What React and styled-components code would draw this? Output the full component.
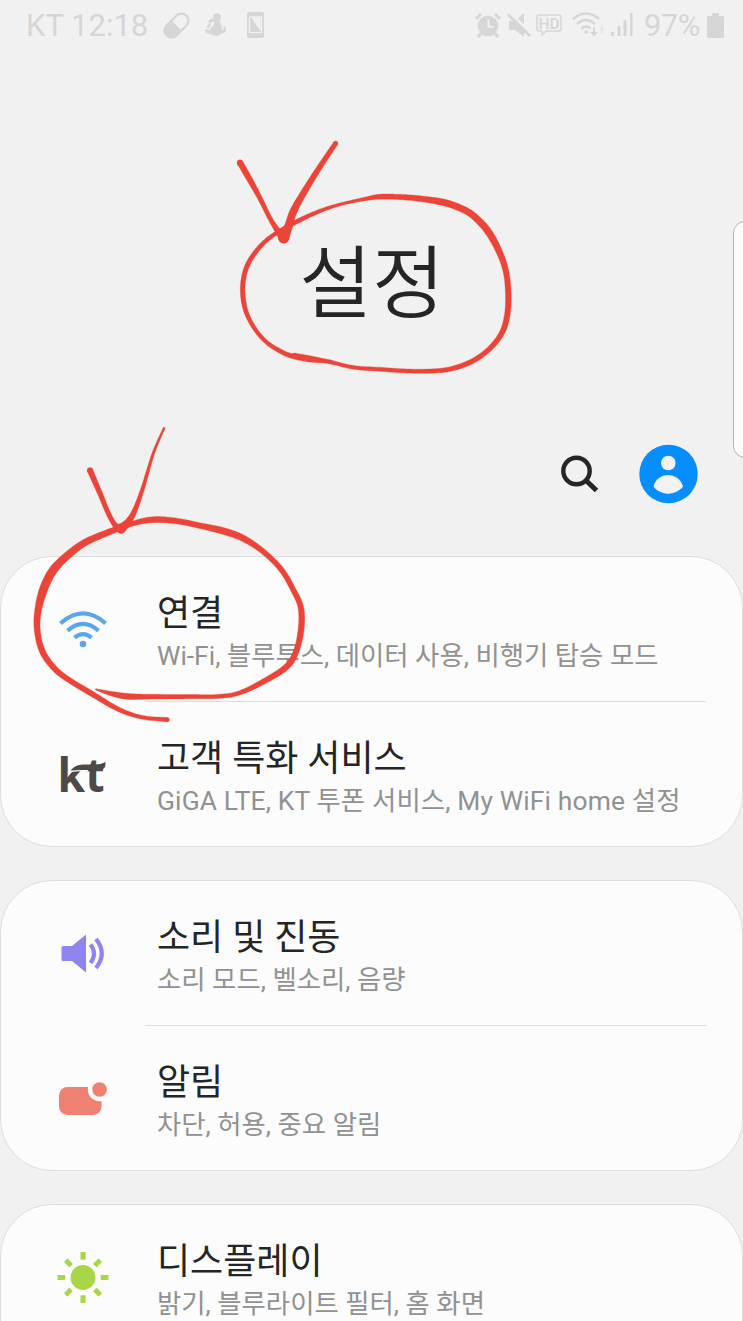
import styled, { createGlobalStyle } from "styled-components"

const GlobalStyle = createGlobalStyle`
  * {
    box-sizing: border-box;
  }

  body {
    margin: 0;
    background-color: #f1f1f1;
    font-family: Roboto, "Noto Sans CJK KR", sans-serif;
    overflow: hidden;
  }
`

const Screen = styled.main`
  position: relative;
  width: 743px;
  height: 1321px;
  overflow: hidden;
  background-color: #f1f1f1;
`

const StatusBar = styled.div`
  display: flex;
  align-items: center;
  justify-content: space-between;
  height: 50px;
  padding: 0 19px 0 26px;
  color: #d6d6d6;
  font-size: 31px;
  line-height: 50px;
`

const StatusGroup = styled.div`
  display: flex;
  align-items: center;
`

const StatusText = styled.span`
  width: ${({ $width }) => $width}px;
  white-space: nowrap;
  letter-spacing: ${({ $spacing }) => $spacing || 0}px;
  padding-top: 2px;
`

const Icon = styled.svg`
  display: block;
  flex-shrink: 0;
  overflow: visible;
  margin-left: ${({ $left }) => $left || 0}px;
`

const Header = styled.header`
  display: flex;
  justify-content: center;
  height: 374px;
  padding: 175px 0 0 1px;
`

const Title = styled.h1`
  margin: 0;
  font-size: 79px;
  font-weight: 350;
  line-height: 120px;
  color: #252525;
`

const Toolbar = styled.div`
  display: flex;
  align-items: center;
  justify-content: flex-end;
  gap: 41px;
  height: 100px;
  padding-right: 45px;
`

const ToolButton = styled.button`
  display: flex;
  padding: 0;
  border: 0;
  background: none;
`

const List = styled.div`
  display: flex;
  flex-direction: column;
  gap: 33px;
  padding-top: 32px;
`

const Card = styled.section`
  height: 291px;
  border: 1px solid #dedede;
  border-radius: 52px;
  background-color: #fcfcfc;
`

const Row = styled.div`
  display: flex;
  height: 145px;
`

const IconSlot = styled.div`
  display: flex;
  align-items: center;
  justify-content: center;
  width: 144px;
  padding: 0 0 1px 19px;
  flex-shrink: 0;
`

const RowBody = styled.div`
  flex: 1;
  margin-right: 36px;
  padding: 35px 0 0 12px;
  white-space: nowrap;
  border-bottom: ${({ $divider }) => ($divider ? "1px solid #dcdcdc" : "0")};
`

const RowTitle = styled.div`
  font-size: 36px;
  line-height: 44px;
  color: #252525;
`

const RowText = styled.div`
  margin-top: 2px;
  font-size: 26.4px;
  line-height: 36px;
  letter-spacing: ${({ $spacing }) => $spacing || 0}px;
  color: #919191;
`

const EdgeHandle = styled.div`
  position: absolute;
  top: 221px;
  left: 733px;
  width: 24px;
  height: 237px;
  border: 1px solid #b4b4b4;
  border-radius: 13px;
  background-color: #fcfcfc;
`

const Ink = styled.svg`
  position: absolute;
  top: 0;
  left: 0;
  pointer-events: none;
  fill: #ec4438;
  stroke: #ec4438;
`

// [x, y, width], three units to the pixel, relative to each group's origin
const titleInk = [
  [[222, 675, 12], [280, 686, 13], [335, 697, 11], [400, 712, 11], [480, 718, 12], [560, 723, 12], [640, 723, 13], [700, 715, 14], [760, 692, 15], [810, 655, 15], [845, 610, 16], [861, 560, 17], [865, 500, 17], [859, 430, 17], [840, 370, 19], [805, 305, 21], [760, 257, 20], [720, 234, 20], [670, 217, 20], [600, 206, 17], [540, 201, 16], [480, 200, 15], [440, 206, 11], [400, 214, 9], [350, 226, 9], [300, 243, 11], [240, 270, 13], [165, 312, 12], [120, 350, 13], [85, 400, 14], [70, 450, 14], [69, 500, 14], [80, 550, 13], [105, 597, 12], [140, 637, 12], [180, 663, 13], [215, 678, 14], [270, 688, 16], [335, 695, 9]],
  [[60, 98, 18], [90, 150, 17], [120, 205, 14], [150, 265, 13], [175, 305, 18], [191, 325, 28]],
  [[347, 40, 14], [300, 110, 16], [250, 190, 19], [220, 245, 22], [205, 290, 24], [191, 324, 32]],
]

const connectionInk = [
  [[228, 808, 4], [270, 820, 13], [320, 829, 18], [370, 830, 15], [500, 830, 13], [600, 829, 12], [660, 818, 13], [730, 785, 16], [800, 740, 18], [830, 690, 17], [844, 620, 18], [842, 560, 17], [820, 510, 16], [785, 450, 16], [730, 395, 16], [670, 355, 19], [610, 333, 20], [540, 317, 17], [470, 303, 17], [400, 299, 18], [340, 310, 15], [270, 335, 18], [200, 365, 20], [150, 400, 22], [100, 450, 25], [70, 510, 25], [53, 580, 20], [53, 640, 18], [70, 700, 18], [110, 752, 17], [160, 788, 16], [220, 824, 16], [280, 860, 14], [330, 882, 12], [380, 894, 11], [442, 899, 13]],
  [[210, 151, 17], [240, 220, 15], [265, 280, 14], [285, 315, 16], [303, 326, 28]],
  [[432, 25, 6], [400, 100, 8], [370, 200, 11], [345, 270, 15], [325, 305, 20], [303, 326, 28]],
]

const spline = (a, b, c, d, t) =>
  0.5 * (2 * b + (c - a) * t + (2 * a - 5 * b + 4 * c - d) * t * t + (3 * b - a - 3 * c + d) * t * t * t)

// Turns a pen line with varying pressure into a closed outline
const outline = (points) => {
  const line = []
  for (let i = 0; i < points.length - 1; i++) {
    const a = points[i - 1] || points[i]
    const d = points[i + 2] || points[i + 1]
    for (let s = 0; s < 8; s++) {
      line.push([0, 1, 2].map((k) => spline(a[k], points[i][k], points[i + 1][k], d[k], s / 8)))
    }
  }
  line.push(points[points.length - 1])
  const left = []
  const right = []
  line.forEach(([x, y, w], i) => {
    const p = line[i - 1] || line[i]
    const n = line[i + 1] || line[i]
    const dx = n[0] - p[0]
    const dy = n[1] - p[1]
    const len = Math.hypot(dx, dy) || 1
    const ox = (-dy / len) * (w / 2)
    const oy = (dx / len) * (w / 2)
    left.push(`${(x + ox).toFixed(1)} ${(y + oy).toFixed(1)}`)
    right.unshift(`${(x - ox).toFixed(1)} ${(y - oy).toFixed(1)}`)
  })
  return `M${left.join("L")}L${right.join("L")}Z`
}

const PenStroke = ({ points }) => {
  const ends = [points[0], points[points.length - 1]]
  return (
    <>
      <path d={outline(points)} />
      {ends.map(([x, y, w]) => <circle key={`${x}-${y}`} cx={x} cy={y} r={w / 2} />)}
    </>
  )
}

const PillIcon = () => (
  <Icon $left={14} width="27" height="27" viewBox="0 0 27 27">
    <g transform="rotate(-45 13.5 13.5)">
      <rect x="-.5" y="6.5" width="28" height="14" rx="7" fill="none" stroke="currentColor" strokeWidth="2.2" />
      <path d="M13.5 5.500v16H6.500a8 8 0 0 1 0-16z" fill="currentColor" />
    </g>
  </Icon>
)

const FigureIcon = () => (
  <Icon $left={15} width="22" height="24" viewBox="0 0 22 24" fill="currentColor">
    <circle cx="12" cy="4.200" r="4" />
    <path d="M9.500 4 3 8l1 2 7-2.500z" />
    <path d="M9.500 7h5l1 4c1.500 2 1.500 4 1 6 2 0 3-1.500 2-3.500l1.500-.5c2.500 4 .5 7.500-3.500 7.500-2 3-8.500 3-11 .5C2 21 0 19.500 0 17l2-1c.5 1 1.500 1.500 3 1 .5-2 2-3.500 4-5z" />
    <path d="m1.500 14 3-4 2 .5-3 5z" />
  </Icon>
)

const PhoneIcon = () => (
  <Icon $left={20} width="17" height="26" viewBox="0 0 17 26">
    <rect width="17" height="26" rx="2" fill="currentColor" />
    <rect x="2.500" y="5" width="12" height="15.500" fill="none" stroke="#f1f1f1" strokeWidth="1.300" />
    <path d="M5 6.500 13.500 19V5.500H5z" fill="#f1f1f1" />
  </Icon>
)

const AlarmIcon = () => (
  <Icon width="26" height="25" viewBox="0 0 26 25" fill="none" stroke="currentColor">
    <circle cx="13" cy="13" r="10.300" fill="currentColor" stroke="none" />
    <path d="M1 6 6 1M20 1l5 5" strokeWidth="3" />
    <path d="m6 20-3 4M20 20l3 4" strokeWidth="3" />
    <path d="M13.500 6.500v7.200h5" stroke="#f1f1f1" strokeWidth="2" />
  </Icon>
)

const MuteIcon = () => (
  <Icon $left={7} width="24" height="25" viewBox="0 0 24 25">
    <path d="M1 8h6l9-8v24l-9-7H1z" fill="currentColor" />
    <path d="M2 0 24 21" stroke="#f1f1f1" strokeWidth="3" />
    <path d="M0 1.500 22 23" stroke="currentColor" strokeWidth="2.800" />
  </Icon>
)

const HdIcon = () => (
  <Icon $left={4} width="26" height="23" viewBox="0 0 26 23">
    <path d="M3 1h20q2 0 2 2v12q0 2-2 2H10l-4 4v-4H3q-2 0-2-2V3q0-2 2-2z" fill="none" stroke="currentColor" strokeWidth="1.500" />
    <text x="13" y="14.500" textAnchor="middle" fontSize="15.500" fontWeight="500" fill="currentColor">HD</text>
  </Icon>
)

const StatusWifiIcon = () => (
  <Icon $left={10} width="33" height="26" viewBox="0 0 33 26" fill="none" stroke="currentColor" strokeWidth="2.600">
    <path d="M1 7Q14-4 27 7M5 12Q14 4 23 12M9.500 16.500Q14 12.500 18.500 16.500" />
    <circle cx="14" cy="20" r="1.800" fill="currentColor" stroke="none" />
    <path d="M22 15v6" strokeWidth="2" />
    <path d="M18 20h8l-4 4.500z" fill="currentColor" stroke="none" />
    <path d="m27 18 3-4 3 4h-2v4h-2v-4z" fill="currentColor" stroke="none" opacity=".4" />
  </Icon>
)

const SignalIcon = () => (
  <Icon $left={6} width="22" height="24" viewBox="0 0 22 24" fill="currentColor">
    <path d="M0 19h3v4H0zM6.500 13h3v10h-3zM12.500 7h3v16h-3zM19 0h2.500v23H19z" />
  </Icon>
)

const BatteryIcon = () => (
  <Icon width="17" height="25" viewBox="0 0 17 25" fill="currentColor">
    <path d="M5 0h7v3h3.500Q17 3 17 4.500v19q0 1.500-1.500 1.500h-14Q0 25 0 23.500v-19Q0 3 1.500 3H5z" />
  </Icon>
)

const SearchIcon = () => (
  <Icon width="37" height="37" viewBox="0 0 37 37" fill="none" stroke="#252525">
    <circle cx="15.500" cy="15" r="13.200" strokeWidth="4.400" />
    <path d="m24.500 24 11 10.500" strokeWidth="5" />
  </Icon>
)

const AccountIcon = () => (
  <Icon width="59" height="59" viewBox="0 0 59 59">
    <circle cx="29.500" cy="29" r="29.200" fill="#068dff" />
    <g fill="#f3f3f3">
      <circle cx="29.300" cy="18" r="7.300" />
      <path d="M14.500 41.500C18 26 40 26 44 41.500 37 51 21 51 14.500 41.500z" />
    </g>
  </Icon>
)

const WifiIcon = () => (
  <Icon width="48" height="37" viewBox="0 0 48 37" fill="none" stroke="#5ba5ed" strokeWidth="4.200">
    <path d="M1.500 12.300Q24-7.500 46.500 12.300M8.500 19.700Q24 6 39.500 19.700M15.500 26.700Q24 19.500 32.500 26.700" />
    <circle cx="24" cy="33" r="3.300" fill="#5ba5ed" stroke="none" />
  </Icon>
)

const KtIcon = () => (
  <Icon width="46" height="38" viewBox="0 0 46 38" fill="#4d4948">
    <text x="-2.500" y="37" fontFamily="Open Sans" fontWeight="700" fontSize="47" textLength="47" lengthAdjust="spacingAndGlyphs">kt</text>
    <path d="M11 16.300Q18 15.300 28 15.300" fill="none" stroke="#fcfcfc" strokeWidth="1.400" />
    <path d="M10.500 15.500Q15 9.500 23 9.500h12q6 0 10.500-2.500v2q0 6-7 6H22q-7 0-11.500 .5z" />
  </Icon>
)

const SoundIcon = () => (
  <Icon width="44" height="39" viewBox="0 0 44 39" fill="#8f85ee">
    <path d="M2 12h9L25 .5v38L11 27H2q-1.500 0-1.500-1.500v-12Q.5 12 2 12z" />
    <path d="M29.500 10.500Q36.500 19.500 29.500 29M35 5Q46.500 19.500 35 34" fill="none" stroke="#8f85ee" strokeWidth="4.200" />
  </Icon>
)

const NoticeIcon = () => (
  <Icon width="48" height="33" viewBox="0 0 48 33">
    <rect y="5" width="42.500" height="28" rx="8.500" fill="#f08172" />
    <circle cx="40.500" cy="7.500" r="11.700" fill="#fcfcfc" />
    <circle cx="40.500" cy="7.500" r="7.300" fill="#f08172" />
  </Icon>
)

const SunIcon = () => (
  <Icon width="52" height="51" viewBox="-26 -25.500 52 51" fill="#a9d647">
    <circle r="12.500" />
    {[0, 45, 90, 135, 180, 225, 270, 315].map((angle) => (
      <rect key={angle} x="-2.500" y={angle % 90 ? -24.5 : -25.5} width="5" height="7.800" rx=".6" transform={`rotate(${angle})`} />
    ))}
  </Icon>
)

const groups = [
  [
    { icon: WifiIcon, title: "연결", text: "Wi-Fi, 블루투스, 데이터 사용, 비행기 탑승 모드" },
    { icon: KtIcon, title: "고객 특화 서비스", text: "GiGA LTE, KT 투폰 서비스, My WiFi home 설정", spacing: 0.14 },
  ],
  [
    { icon: SoundIcon, title: "소리 및 진동", text: "소리 모드, 벨소리, 음량" },
    { icon: NoticeIcon, title: "알림", text: "차단, 허용, 중요 알림" },
  ],
  [{ icon: SunIcon, title: "디스플레이", text: "밝기, 블루라이트 필터, 홈 화면" }],
]

const App = () => (
  <Screen>
    <GlobalStyle />
    <StatusBar>
      <StatusGroup>
        <StatusText $width={123}>KT 12:18</StatusText>
        <PillIcon />
        <FigureIcon />
        <PhoneIcon />
      </StatusGroup>
      <StatusGroup>
        <AlarmIcon />
        <MuteIcon />
        <HdIcon />
        <StatusWifiIcon />
        <SignalIcon />
        <Icon width="11" height="1" />
        <StatusText $width={63} $spacing={-0.6}>97%</StatusText>
        <BatteryIcon />
      </StatusGroup>
    </StatusBar>
    <Header>
      <Title>설정</Title>
    </Header>
    <Toolbar>
      <ToolButton aria-label="검색"><SearchIcon /></ToolButton>
      <ToolButton aria-label="계정"><AccountIcon /></ToolButton>
    </Toolbar>
    <List>
      {groups.map((rows) => (
        <Card key={rows[0].title}>
          {rows.map(({ icon: RowIcon, title, text, spacing }, i) => (
            <Row key={title}>
              <IconSlot><RowIcon /></IconSlot>
              <RowBody $divider={i < rows.length - 1}>
                <RowTitle>{title}</RowTitle>
                <RowText $spacing={spacing}>{text}</RowText>
              </RowBody>
            </Row>
          ))}
        </Card>
      ))}
    </List>
    <EdgeHandle />
    <Ink width="743" height="1321" viewBox="0 0 743 1321">
      <g transform="translate(220 130) scale(.33333)">
        {titleInk.map((points, i) => <PenStroke key={i} points={points} />)}
      </g>
      <g transform="translate(20 420) scale(.33333)">
        {connectionInk.map((points, i) => <PenStroke key={i} points={points} />)}
      </g>
    </Ink>
  </Screen>
)

export default App
